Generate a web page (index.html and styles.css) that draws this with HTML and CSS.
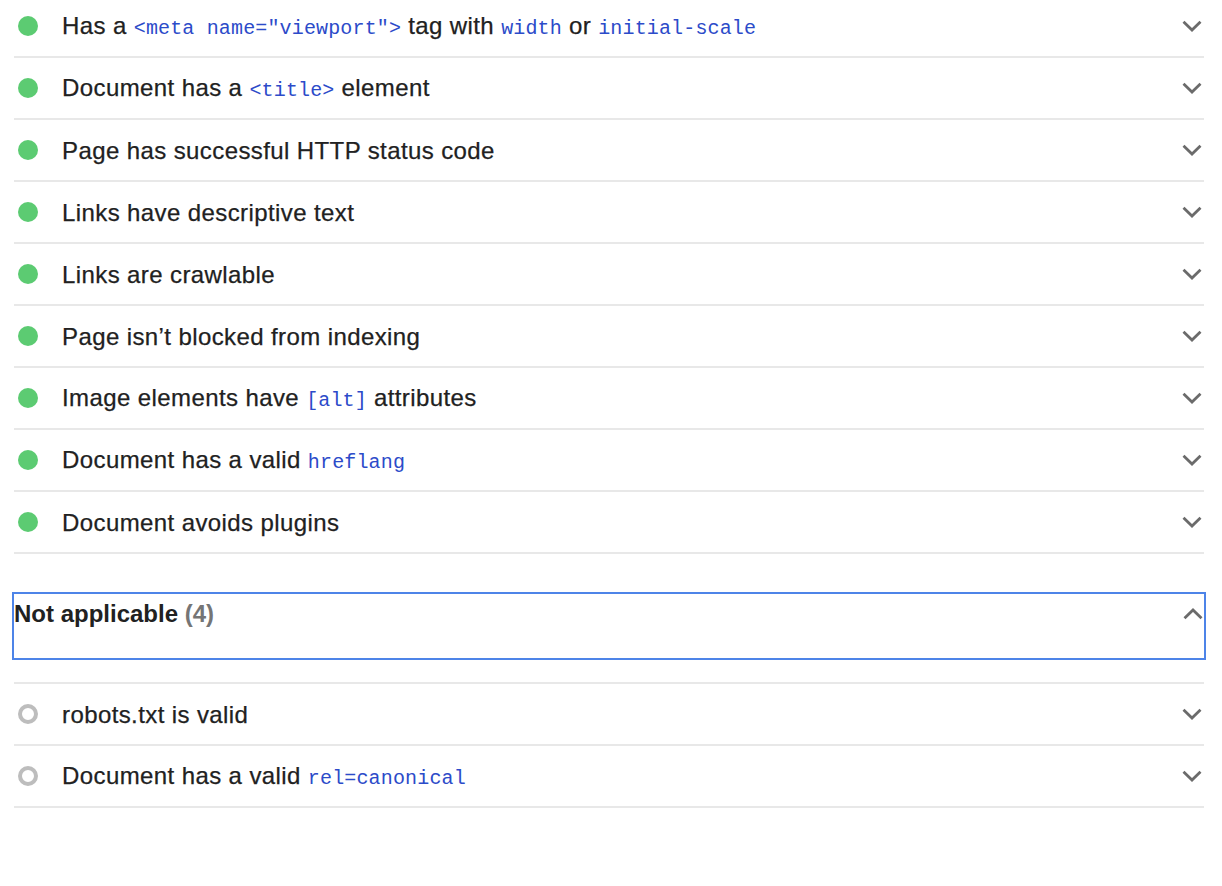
FILE: index.html
```html
<!DOCTYPE html>
<html lang="en">
<head>
<meta charset="utf-8">
<title>Audits</title>
<link rel="stylesheet" href="styles.css">
</head>
<body>
<div class="page">
  <div class="list list--top">
    <div class="row"><span class="icon"><span class="dot"></span></span><span class="title">Has a <code>&lt;meta name="viewport"&gt;</code> tag with <code>width</code> or <code>initial-scale</code></span><svg class="chev" width="20" height="12" viewBox="0 0 20 12"><polyline points="1.5,1.8 10,10 18.5,1.8"/></svg></div>
    <div class="row"><span class="icon"><span class="dot"></span></span><span class="title">Document has a <code>&lt;title&gt;</code> element</span><svg class="chev" width="20" height="12" viewBox="0 0 20 12"><polyline points="1.5,1.8 10,10 18.5,1.8"/></svg></div>
    <div class="row"><span class="icon"><span class="dot"></span></span><span class="title">Page has successful HTTP status code</span><svg class="chev" width="20" height="12" viewBox="0 0 20 12"><polyline points="1.5,1.8 10,10 18.5,1.8"/></svg></div>
    <div class="row"><span class="icon"><span class="dot"></span></span><span class="title">Links have descriptive text</span><svg class="chev" width="20" height="12" viewBox="0 0 20 12"><polyline points="1.5,1.8 10,10 18.5,1.8"/></svg></div>
    <div class="row"><span class="icon"><span class="dot"></span></span><span class="title">Links are crawlable</span><svg class="chev" width="20" height="12" viewBox="0 0 20 12"><polyline points="1.5,1.8 10,10 18.5,1.8"/></svg></div>
    <div class="row"><span class="icon"><span class="dot"></span></span><span class="title">Page isn’t blocked from indexing</span><svg class="chev" width="20" height="12" viewBox="0 0 20 12"><polyline points="1.5,1.8 10,10 18.5,1.8"/></svg></div>
    <div class="row"><span class="icon"><span class="dot"></span></span><span class="title">Image elements have <code>[alt]</code> attributes</span><svg class="chev" width="20" height="12" viewBox="0 0 20 12"><polyline points="1.5,1.8 10,10 18.5,1.8"/></svg></div>
    <div class="row"><span class="icon"><span class="dot"></span></span><span class="title">Document has a valid <code>hreflang</code></span><svg class="chev" width="20" height="12" viewBox="0 0 20 12"><polyline points="1.5,1.8 10,10 18.5,1.8"/></svg></div>
    <div class="row"><span class="icon"><span class="dot"></span></span><span class="title">Document avoids plugins</span><svg class="chev" width="20" height="12" viewBox="0 0 20 12"><polyline points="1.5,1.8 10,10 18.5,1.8"/></svg></div>
  </div>

  <div class="group-head">
    <span class="group-title">Not applicable <span class="count">(4)</span></span>
    <svg class="chev chev--up" width="20" height="12" viewBox="0 0 20 12"><polyline points="1.5,10.2 10,2 18.5,10.2"/></svg>
  </div>

  <div class="list list--na">
    <div class="row"><span class="icon"><span class="ring"></span></span><span class="title">robots.txt is valid</span><svg class="chev" width="20" height="12" viewBox="0 0 20 12"><polyline points="1.5,1.8 10,10 18.5,1.8"/></svg></div>
    <div class="row"><span class="icon"><span class="ring"></span></span><span class="title">Document has a valid <code>rel=canonical</code></span><svg class="chev" width="20" height="12" viewBox="0 0 20 12"><polyline points="1.5,1.8 10,10 18.5,1.8"/></svg></div>
  </div>
</div>
</body>
</html>
```
FILE: styles.css
```css
html, body {
  margin: 0;
  padding: 0;
  background: #ffffff;
}

body {
  font-family: "Liberation Sans", Arial, Helvetica, sans-serif;
  color: #212121;
}

.page {
  padding: 0 18px 0 14px;
}

.list--top {
  margin-top: -4px;
}

.list--na {
  margin-top: 24px;
  border-top: 2px solid #e8e8e8;
}

.row {
  display: flex;
  align-items: center;
  height: 60px;
  border-bottom: 2px solid #e8e8e8;
}

.icon {
  width: 20px;
  height: 20px;
  margin-left: 4px;
  margin-right: 24px;
  display: flex;
  align-items: center;
  justify-content: center;
  flex: none;
}

.dot {
  width: 20px;
  height: 20px;
  border-radius: 50%;
  background: #5ccb72;
}

.ring {
  width: 20px;
  height: 20px;
  box-sizing: border-box;
  border-radius: 50%;
  border: 4px solid #bdbdbd;
}

.title {
  flex: 1;
  font-size: 24px;
  line-height: 28px;
  padding-top: 2px;
  letter-spacing: 0.4px;
  white-space: nowrap;
  -webkit-text-stroke: 0.25px #212121;
}

code {
  font-family: "Liberation Mono", "Courier New", monospace;
  font-size: 20px;
  letter-spacing: 0.15px;
  color: #2c4bc9;
  -webkit-text-stroke: 0;
}

.chev {
  flex: none;
  margin-right: 2px;
  fill: none;
  stroke: #6b6b6b;
  stroke-width: 2.8;
}

.chev--up {
  margin-top: 8px;
  margin-right: 1px;
}

.group-head {
  margin-top: 40px;
  height: 64px;
  box-sizing: border-box;
  padding-top: 6px;
  display: flex;
  justify-content: space-between;
  align-items: flex-start;
  outline: 2px solid #4d84e8;
}

.group-title {
  font-size: 24px;
  font-weight: bold;
  line-height: 27px;
}

.count {
  color: #757575;
}
```
